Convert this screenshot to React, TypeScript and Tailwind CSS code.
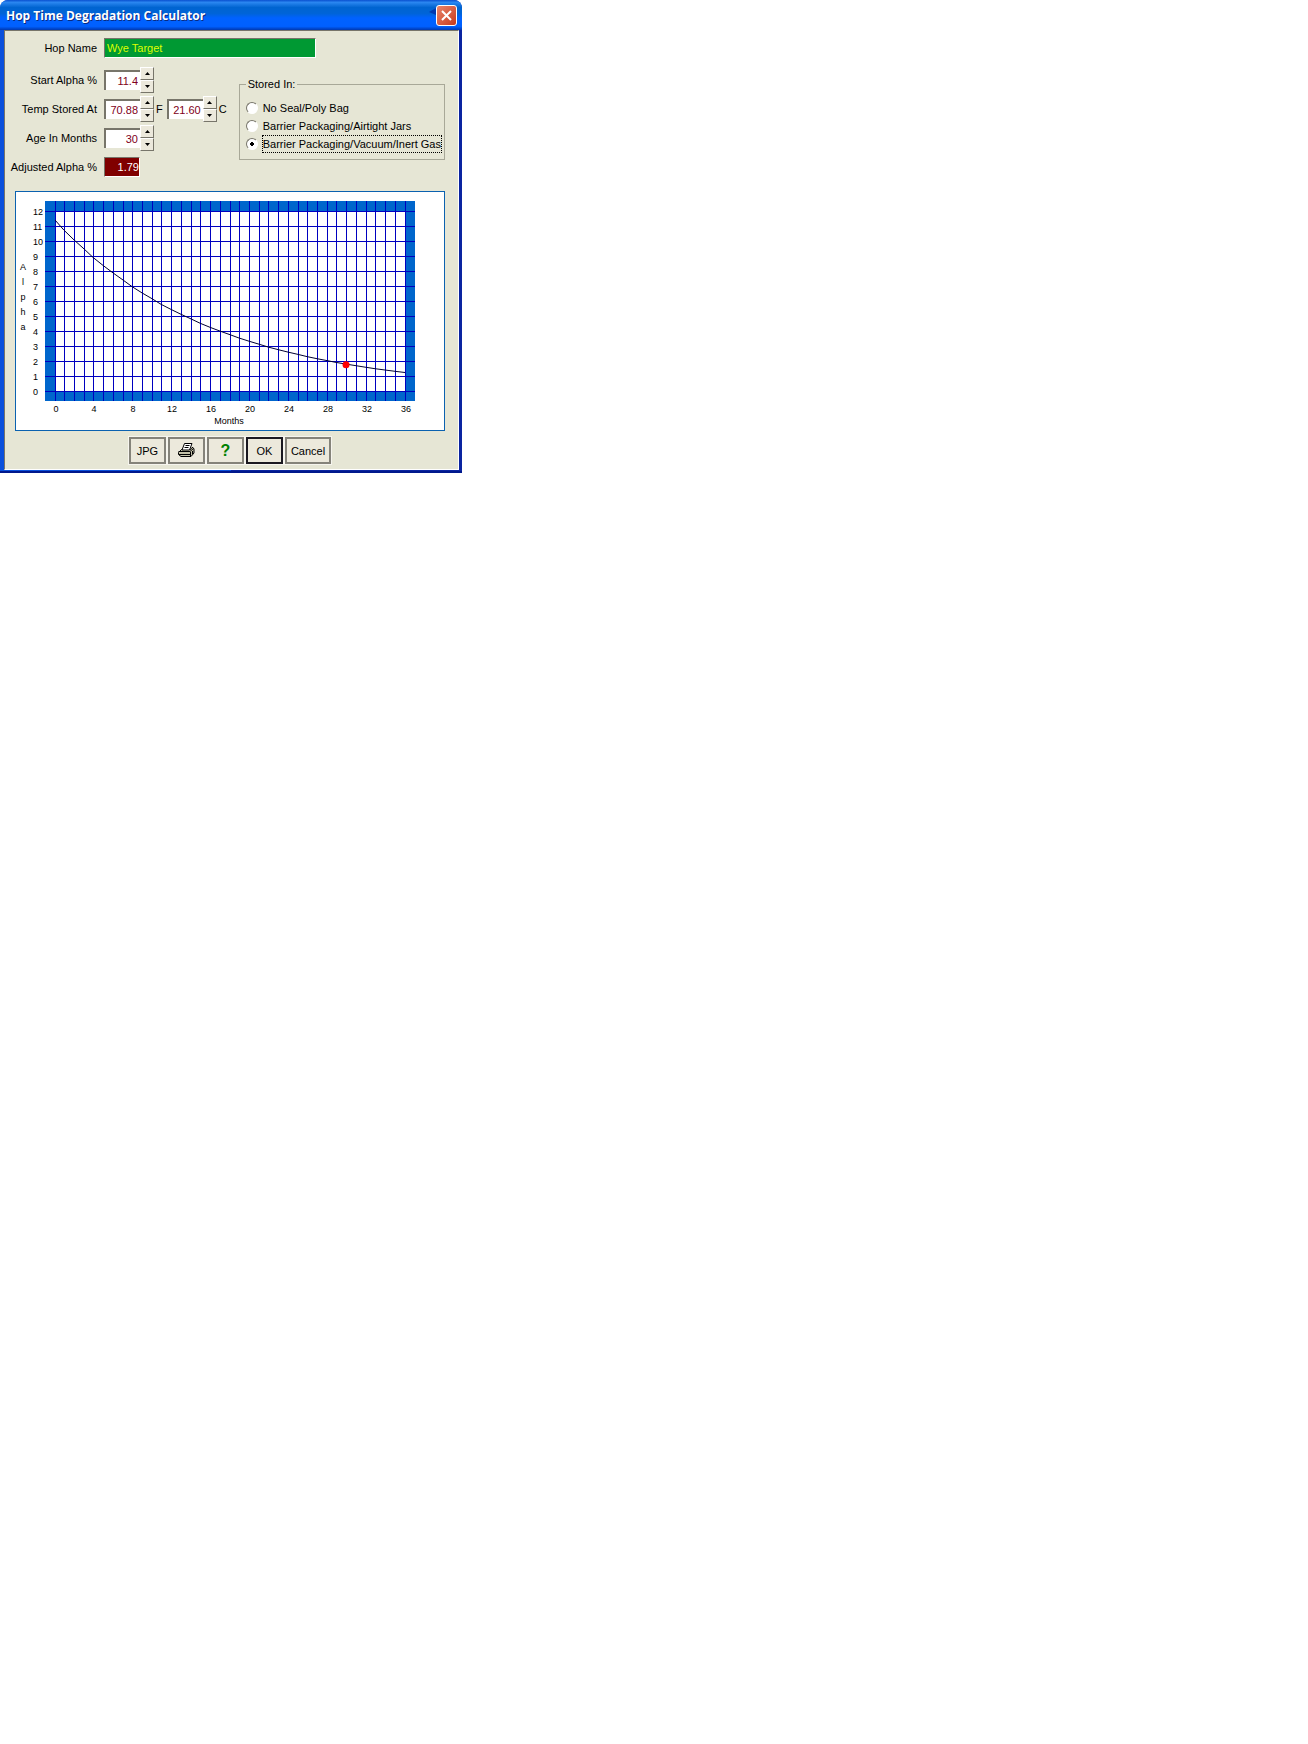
import { useState } from 'react';
import type { ReactNode } from 'react';

const STORAGE = ['No Seal/Poly Bag', 'Barrier Packaging/Airtight Jars', 'Barrier Packaging/Vacuum/Inert Gas'];

// Chart geometry, in svg units
const LEFT = 39;
const BASE = 199;
const PLOT_W = 350;
const UNIT = 15;
const START_ALPHA = 11.4;
const DECAY = 0.0617;

const monthX = (m: number) => LEFT + Math.floor((m * PLOT_W) / 36);
const alphaY = (a: number) => BASE - a * UNIT;
const alphaAt = (m: number) => START_ALPHA * Math.exp(-DECAY * m);

const range = (n: number) => Array.from({ length: n }, (_, i) => i);

function Chart() {
  const curve = range(37)
    .map((m) => `${monthX(m)},${alphaY(alphaAt(m)).toFixed(1)}`)
    .join(' ');

  return (
    <svg viewBox="0 0 428 238" className="block w-full text-[9px]" role="img" aria-label="Alpha by month">
      <rect x="29" y="9" width="370" height="200" fill="#0066cc" />
      <rect x="39" y="19" width="350" height="180" fill="#fff" />
      <g stroke="#0000c0" shapeRendering="crispEdges">
        {range(37).map((m) => (
          <line key={m} x1={monthX(m) + 0.5} x2={monthX(m) + 0.5} y1="9" y2="209" />
        ))}
        {range(13).map((a) => (
          <line key={a} x1="29" x2="399" y1={alphaY(a) + 0.5} y2={alphaY(a) + 0.5} />
        ))}
      </g>
      <polyline points={curve} fill="none" stroke="#000033" />
      <circle cx={monthX(30)} cy={alphaY(alphaAt(30)) + 0.5} r="3.5" fill="#ff0000" />
      {range(13).map((a) => (
        <text key={a} x="17" y={alphaY(a) + 4}>{a}</text>
      ))}
      {range(10).map((i) => (
        <text key={i} x={monthX(i * 4) + 1} y="220" textAnchor="middle">{i * 4}</text>
      ))}
      {'Alpha'.split('').map((c, i) => (
        <text key={i} x="7" textAnchor="middle" y={78 + i * UNIT}>{c}</text>
      ))}
      <text x="213" y="232" textAnchor="middle">Months</text>
    </svg>
  );
}

interface SpinnerProps {
  id: string;
  label?: string;
  value: string;
}

function Spinner({ id, label, value }: SpinnerProps) {
  const [current, setCurrent] = useState(value);
  const digits = value.split('.')[1]?.length ?? 0;
  const step = (by: number) => setCurrent((Number(current) + by).toFixed(digits));
  const arrow = 'flex h-[13px] w-[14px] items-center justify-center border border-t-white border-l-white border-r-[#77756a] border-b-[#77756a] bg-[#ece9dc]';

  return (
    <div className="flex items-center">
      <input
        id={id}
        aria-label={label}
        value={current}
        onChange={(e) => setCurrent(e.target.value)}
        className="h-5 w-[36px] border-t-2 border-l-2 border-[#77756a] bg-white pr-[2px] text-right text-[#800020] outline-none"
      />
      <div>
        <button type="button" aria-label="Increase" onClick={() => step(1)} className={arrow}>
          <svg width="5" height="3" viewBox="0 0 5 3"><path d="M0 3 2.5 0 5 3z" /></svg>
        </button>
        <button type="button" aria-label="Decrease" onClick={() => step(-1)} className={arrow}>
          <svg width="5" height="3" viewBox="0 0 5 3"><path d="M0 0 2.5 3 5 0z" /></svg>
        </button>
      </div>
    </div>
  );
}

function FieldLabel({ htmlFor, children }: { htmlFor: string; children: ReactNode }) {
  return (
    <label htmlFor={htmlFor} className="w-[93px] shrink-0 pr-[3px] text-right whitespace-nowrap">
      {children}
    </label>
  );
}

function DialogButton({ children, label, primary }: { children: ReactNode; label?: string; primary?: boolean }) {
  return (
    <button
      type="button"
      aria-label={label}
      className={[
        'flex h-[27px] min-w-[37px] items-center justify-center border-2 bg-[#ece9dc] px-1 outline outline-[#f6f5ee]',
        primary ? 'border-[#1a1820]' : 'border-[#85837a]',
      ].join(' ')}
    >
      {children}
    </button>
  );
}

function PrinterIcon() {
  return (
    <svg width="17" height="15" viewBox="0 0 17 15" stroke="#000" fill="none">
      <path d="M1.5 8.5 3.5 6.5h9l1.5-2h1l1 1.5v4l-3 3.5h-10l-2.5-2v-2z" fill="#c4c2a8" />
      <path d="M4 7 6.5.5h7.5L11.5 7z" fill="#fff" />
      <path d="M7.5 2.5h4M6.5 4.5h4" />
      <path d="M.5 8.5H12l3.5-3M12.5 9v4M1 11.5h11M14.5 8v3" />
    </svg>
  );
}

export default function App() {
  const [stored, setStored] = useState(2);

  return (
    <main className="w-full max-w-[462px] rounded-t-lg border-b-2 border-[#00188c] bg-linear-to-r from-[#0a50dc] from-50% to-[#0a24a0] to-50% pb-px font-['Liberation_Sans',Arial,sans-serif] text-[11px] leading-4 text-black">
      <header className="flex h-[30px] items-center justify-between rounded-t-lg bg-[linear-gradient(#0a50d0,#2a86f0_8%,#0064d0_25%,#0064d8_45%,#0062ff_60%,#0060ff_88%,#0038b0)] pt-px pr-[5px] pl-[6px]">
        <h1 className="pt-px font-['Open_Sans',sans-serif] text-xs font-bold text-white [text-shadow:1px_1px_#0a2a80]">
          Hop Time Degradation Calculator
        </h1>
        <div className="flex items-start">
          <svg width="7" height="10" viewBox="0 0 7 10" fill="#0038b0"><path d="M0 7 7 3v7z" /></svg>
          <button type="button" aria-label="Close" className="flex size-[21px] items-center justify-center rounded-[3px] border border-white bg-linear-to-br from-[#e8836a] to-[#c83818]">
            <svg width="11" height="11" viewBox="0 0 11 11" stroke="#fff" strokeWidth="2"><path d="M1 1l9 9M10 1l-9 9" /></svg>
          </button>
        </div>
      </header>

      <div className="mr-[3px] ml-1 border border-t-[#77756a] border-l-[#77756a] border-r-white border-b-white bg-[#e6e6d5] pt-[7px] pr-[13px] pb-[5px] pl-[10px]">
        <div className="-ml-[8px] flex items-center gap-[4px]">
          <FieldLabel htmlFor="hop">Hop Name</FieldLabel>
          <input
            id="hop"
            defaultValue="Wye Target"
            className="h-5 w-[212px] border border-t-[#77756a] border-l-[#77756a] border-r-white border-b-white bg-[#009933] px-[2px] text-[#ddff00] outline-none"
          />
        </div>

        <div className="mt-[9px] flex items-start justify-between">
          <div className="-ml-[8px] flex flex-col gap-[3px]">
            <div className="flex items-center gap-[4px]">
              <FieldLabel htmlFor="alpha">Start Alpha %</FieldLabel>
              <Spinner id="alpha" value="11.4" />
            </div>
            <div className="flex items-center gap-[4px]">
              <FieldLabel htmlFor="temp">Temp Stored At</FieldLabel>
              <Spinner id="temp" value="70.88" />
              <span className="-ml-[2px]">F</span>
              <Spinner id="celsius" label="Temperature in Celsius" value="21.60" />
              <span className="-ml-[2px]">C</span>
            </div>
            <div className="flex items-center gap-[4px]">
              <FieldLabel htmlFor="age">Age In Months</FieldLabel>
              <Spinner id="age" value="30" />
            </div>
            <div className="flex h-[26px] items-center gap-[4px]">
              <FieldLabel htmlFor="adjusted">Adjusted Alpha %</FieldLabel>
              <input
                id="adjusted"
                readOnly
                value="1.79"
                className="h-5 w-[36px] border border-t-[#77756a] border-l-[#77756a] border-r-white border-b-white bg-[#800000] text-right text-white outline-none"
              />
            </div>
          </div>

          <fieldset className="mt-[9px] h-[84px] border border-[#a8a898] pr-[3px] pl-[6px]">
            <legend className="px-[2px]">Stored In:</legend>
            <div className="flex flex-col gap-[2px] pt-2">
              {STORAGE.map((name, i) => (
                <label key={name} className="flex items-center gap-[5px] whitespace-nowrap">
                  <input
                    type="radio"
                    name="stored"
                    checked={stored === i}
                    onChange={() => setStored(i)}
                    className="size-3 shrink-0 appearance-none rounded-full border border-t-[#77756a] border-l-[#77756a] border-r-white border-b-white bg-white checked:bg-[radial-gradient(#000_2px,#fff_2px)]"
                  />
                  <span className={stored === i ? 'outline outline-dotted outline-black' : ''}>{name}</span>
                </label>
              ))}
            </div>
          </fieldset>
        </div>

        <div className="mt-[11px] border border-[#0b62b0] bg-white">
          <Chart />
        </div>

        <div className="mt-[6px] flex justify-center gap-[2px]">
          <DialogButton>JPG</DialogButton>
          <DialogButton label="Print"><PrinterIcon /></DialogButton>
          <DialogButton label="Help"><span className="text-base font-bold text-[#008000]">?</span></DialogButton>
          <DialogButton primary>OK</DialogButton>
          <DialogButton>Cancel</DialogButton>
        </div>
      </div>
    </main>
  );
}
